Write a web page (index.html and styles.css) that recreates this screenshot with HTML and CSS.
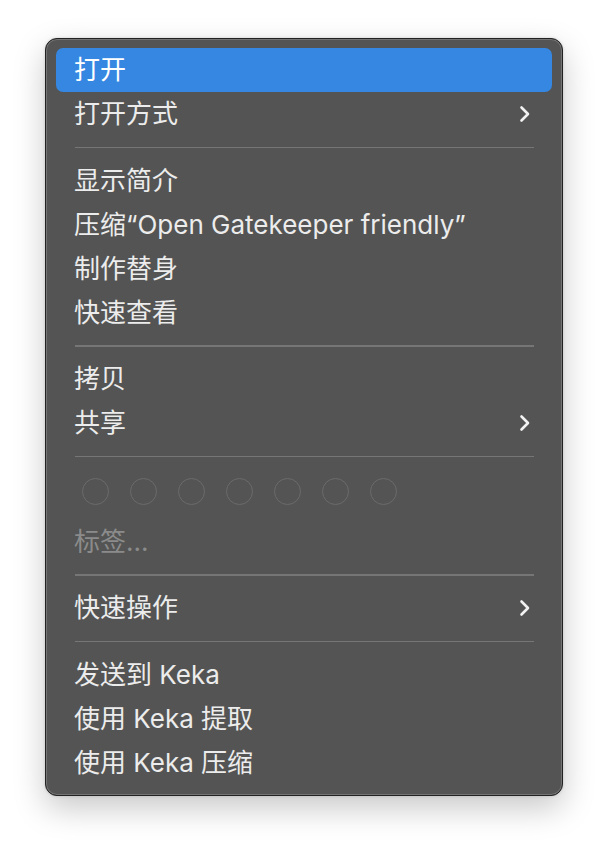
FILE: index.html
```html
<!DOCTYPE html>
<html lang="zh-CN">
<head>
<meta charset="utf-8">
<link rel="stylesheet" href="styles.css">
</head>
<body>
<div class="menu">
  <div class="item active">打开</div>
  <div class="item sub">打开方式<svg class="chev" viewBox="0 0 12 18"><path d="M2.5 2.5 L9 9 L2.5 15.5"/></svg></div>
  <div class="sep"></div>
  <div class="item">显示简介</div>
  <div class="item">压缩“Open Gatekeeper friendly”</div>
  <div class="item">制作替身</div>
  <div class="item">快速查看</div>
  <div class="sep"></div>
  <div class="item">拷贝</div>
  <div class="item sub">共享<svg class="chev" viewBox="0 0 12 18"><path d="M2.5 2.5 L9 9 L2.5 15.5"/></svg></div>
  <div class="sep"></div>
  <div class="tags">
    <span class="dot"></span><span class="dot"></span><span class="dot"></span><span class="dot"></span><span class="dot"></span><span class="dot"></span><span class="dot"></span>
  </div>
  <div class="item disabled">标签...</div>
  <div class="sep"></div>
  <div class="item sub">快速操作<svg class="chev" viewBox="0 0 12 18"><path d="M2.5 2.5 L9 9 L2.5 15.5"/></svg></div>
  <div class="sep"></div>
  <div class="item">发送到 Keka</div>
  <div class="item">使用 Keka 提取</div>
  <div class="item">使用 Keka 压缩</div>
</div>
</body>
</html>
```
FILE: styles.css
```css
html, body {
  margin: 0;
  padding: 0;
  background: #ffffff;
}
body {
  width: 608px;
  height: 848px;
  padding: 38px 0 0 45px;
  box-sizing: border-box;
  font-family: Inter, "Noto Sans CJK SC", sans-serif;
}
.menu {
  width: 518px;
  box-sizing: border-box;
  background: #535453;
  border: 1px solid #222222;
  border-radius: 12px;
  box-shadow: inset 0 0 0 1px #747474, 0 12px 32px rgba(0,0,0,0.22), 0 0 3px rgba(0,0,0,0.15);
  padding: 9px 10px 10px 10px;
  display: flex;
  flex-direction: column;
}
.item {
  height: 44px;
  display: flex;
  align-items: center;
  justify-content: space-between;
  padding: 0 21px 0 18px;
  border-radius: 7px;
  color: #ececec;
  font-size: 26px;
  line-height: 1;
  box-sizing: border-box;
}
.item.active {
  background: #3587e2;
  color: #ffffff;
}
.item.disabled {
  color: #8b8b8b;
}
.chev {
  width: 12px;
  height: 18px;
  fill: none;
  stroke: #f2f2f2;
  stroke-width: 2.6;
  stroke-linecap: round;
  stroke-linejoin: round;
}
.sep {
  height: 1.5px;
  background: #767676;
  margin: 10.5px 18px 10.5px 19px;
}
.tags {
  height: 52px;
  display: flex;
  align-items: center;
  gap: 21px;
  padding: 0 0 5px 26px;
  box-sizing: border-box;
}
.dot {
  width: 27px;
  height: 27px;
  box-sizing: border-box;
  border: 1.5px solid #6b6b6b;
  border-radius: 50%;
}
```
